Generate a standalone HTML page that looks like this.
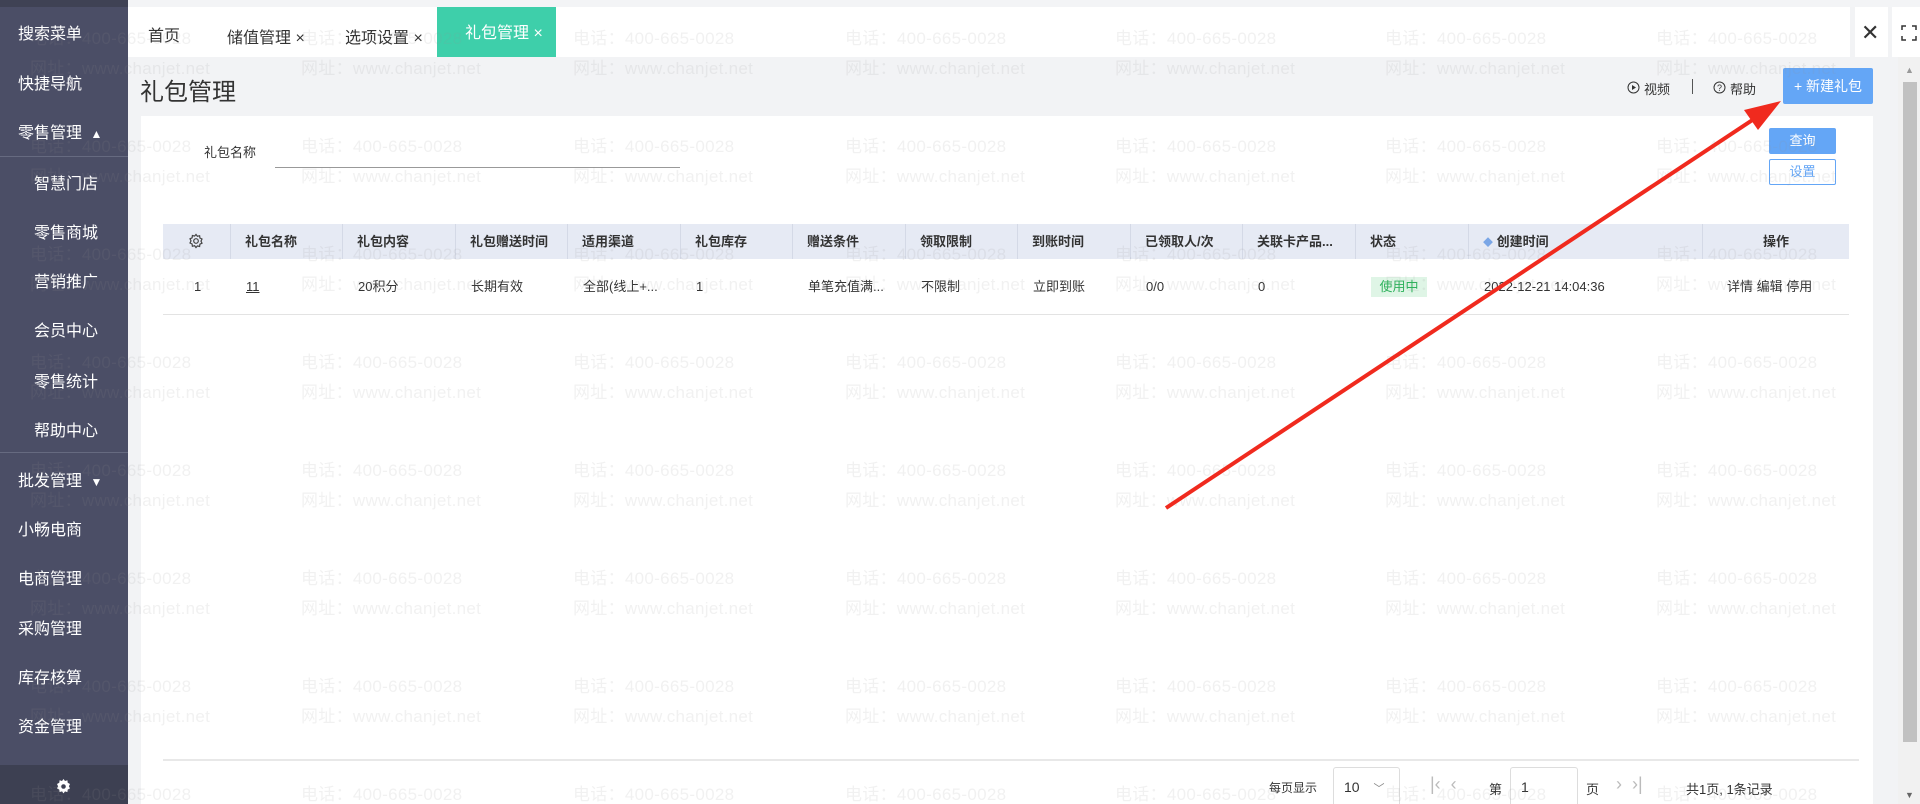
<!DOCTYPE html>
<html style="overflow:hidden;height:804px"><head><meta charset="utf-8"><style>
*{margin:0;padding:0;box-sizing:border-box}
body{width:1920px;height:804px;overflow:hidden;position:relative;background:#f2f3f5;font-family:"Liberation Sans","Noto Sans CJK SC",sans-serif;color:#333}
.a{position:absolute;white-space:nowrap}
#side{left:0;top:0;width:128px;height:804px;background:#4b4e66}
.si{position:absolute;left:18px;color:#fff;font-size:16px;transform:translateY(-50%)}
.sub{left:34px}
.th{position:absolute;top:224px;height:35px;line-height:35px;font-size:13px;font-weight:bold;color:#333;padding-left:14px;border-left:1px solid #d4d9e6}
.td{position:absolute;top:277px;height:20px;line-height:20px;font-size:13px;color:#333;padding-left:14px}
.wm{position:absolute;color:rgba(150,150,150,0.13);font-size:17px;white-space:nowrap;pointer-events:none;letter-spacing:0.3px}
</style></head><body>
<div class="a" style="left:128px;top:0;width:1792px;height:7px;background:#f3f4f6"></div>
<div class="a" style="left:128px;top:7px;width:1722px;height:50px;background:#fff"></div>
<div class="a" style="left:1855px;top:7px;width:33px;height:50px;background:#fff"></div>
<div class="a" style="left:1892px;top:7px;width:28px;height:50px;background:#fff"></div>
<div class="a" style="left:148px;top:22px;font-size:16px">首页</div>
<div class="a" style="left:227px;top:24px;font-size:16px">储值管理 ×</div>
<div class="a" style="left:345px;top:24px;font-size:16px">选项设置 ×</div>
<div class="a" style="left:437px;top:7px;width:119px;height:50px;background:#3ecfaa;color:#fff;font-size:16px;line-height:20px;padding-top:17px;padding-left:28px">礼包管理 ×</div>
<div class="a" style="left:1861px;top:20px;font-size:22px;color:#333">✕</div>
<svg class="a" style="left:1901px;top:25px" width="16" height="16" fill="none" stroke="#333" stroke-width="1.5"><path d="M1 5V1h4M11 1h4v4M15 11v4h-4M5 15H1v-4"/></svg>

<div class="a" style="left:140px;top:72px;font-size:24px;color:#333">礼包管理</div>
<svg class="a" style="left:1627px;top:81px" width="13" height="13"><circle cx="6.5" cy="6.5" r="5.5" fill="none" stroke="#333"/><path d="M5 4l4 2.5L5 9z" fill="#333"/></svg>
<div class="a" style="left:1644px;top:79px;font-size:13px">视频</div>
<div class="a" style="left:1692px;top:79px;width:1px;height:15px;background:#555"></div>
<svg class="a" style="left:1713px;top:81px" width="13" height="13"><circle cx="6.5" cy="6.5" r="5.5" fill="none" stroke="#333"/><text x="6.5" y="10" font-size="9" text-anchor="middle" fill="#333">?</text></svg>
<div class="a" style="left:1730px;top:79px;font-size:13px">帮助</div>
<div class="a" style="left:1783px;top:68px;width:90px;height:36px;background:#64a6f6;border-radius:2px;color:#fff;font-size:14px;line-height:36px;text-align:center">+ 新建礼包</div>

<div class="a" style="left:141px;top:116px;width:1732px;height:688px;background:#fff"></div>
<div class="a" style="left:204px;top:142px;font-size:13px">礼包名称</div>
<div class="a" style="left:275px;top:167px;width:405px;height:1px;background:#999"></div>
<div class="a" style="left:1769px;top:128px;width:67px;height:26px;background:#64a6f6;border-radius:2px;color:#fff;font-size:13px;line-height:26px;text-align:center">查询</div>
<div class="a" style="left:1769px;top:159px;width:67px;height:26px;border:1px solid #64a6f6;border-radius:2px;color:#64a6f6;font-size:13px;line-height:24px;text-align:center">设置</div>

<div class="a" style="left:163px;top:224px;width:1686px;height:35px;background:#e6eaf4"></div>
<svg class="a" style="left:188px;top:233px" width="16" height="16" fill="none" stroke="#444" stroke-width="1.2"><path d="M8 1.5l1.4 1.8 2.2-.6.3 2.3 2.1 1-1 2.1 1 2.1-2.1 1-.3 2.3-2.2-.6L8 14.5l-1.4-1.8-2.2.6-.3-2.3-2.1-1 1-2.1-1-2.1 2.1-1 .3-2.3 2.2.6z"/><circle cx="8" cy="8" r="2.3"/></svg>
<div class="th" style="left:230px">礼包名称</div>
<div class="th" style="left:342px">礼包内容</div>
<div class="th" style="left:455px">礼包赠送时间</div>
<div class="th" style="left:567px">适用渠道</div>
<div class="th" style="left:680px">礼包库存</div>
<div class="th" style="left:792px">赠送条件</div>
<div class="th" style="left:905px">领取限制</div>
<div class="th" style="left:1017px">到账时间</div>
<div class="th" style="left:1130px">已领取人/次</div>
<div class="th" style="left:1242px">关联卡产品...</div>
<div class="th" style="left:1355px">状态</div>
<div class="th" style="left:1468px;padding-left:14px"><span style="color:#7aa6e6;font-size:10px">◆</span> 创建时间</div>
<div class="th" style="left:1702px;width:147px;padding:0;text-align:center">操作</div>
<div class="td" style="left:180px">1</div>
<div class="td" style="left:232px;text-decoration:underline">11</div>
<div class="td" style="left:344px">20积分</div>
<div class="td" style="left:457px">长期有效</div>
<div class="td" style="left:569px">全部(线上+...</div>
<div class="td" style="left:682px">1</div>
<div class="td" style="left:794px">单笔充值满...</div>
<div class="td" style="left:907px">不限制</div>
<div class="td" style="left:1019px">立即到账</div>
<div class="td" style="left:1132px">0/0</div>
<div class="td" style="left:1244px">0</div>
<div class="a" style="left:1371px;top:277px;width:56px;height:20px;background:#dff5e6;color:#2bb25a;font-size:13px;line-height:20px;text-align:center">使用中</div>
<div class="td" style="left:1470px">2022-12-21 14:04:36</div>
<div class="td" style="left:1713px">详情 编辑 停用</div>
<div class="a" style="left:163px;top:314px;width:1686px;height:1px;background:#e3e3e3"></div>

<div class="a" style="left:163px;top:759px;width:1696px;height:2px;background:#e8e8e8"></div>
<div class="a" style="left:1269px;top:779px;font-size:12px">每页显示</div>
<div class="a" style="left:1333px;top:767px;width:67px;height:40px;border:1px solid #ddd;border-radius:3px;font-size:14px;line-height:38px;padding-left:10px">10 <span style="color:#888;margin-left:10px;font-size:11px">﹀</span></div>
<div class="a" style="left:1430px;top:774px;font-size:18px;color:#bbb">|‹ &nbsp;‹</div>
<div class="a" style="left:1489px;top:779px;font-size:13px">第</div>
<div class="a" style="left:1510px;top:767px;width:68px;height:40px;border:1px solid #ddd;border-radius:3px;font-size:14px;line-height:38px;padding-left:10px">1</div>
<div class="a" style="left:1586px;top:779px;font-size:13px">页</div>
<div class="a" style="left:1616px;top:774px;font-size:18px;color:#bbb">› &nbsp;›|</div>
<div class="a" style="left:1686px;top:779px;font-size:13px">共1页, 1条记录</div>

<div class="a" style="left:1898px;top:57px;width:22px;height:747px;background:#f1f1f1"></div>
<div class="a" style="left:1903px;top:82px;width:14px;height:660px;background:#c1c1c1"></div>
<div class="a" style="left:1905px;top:65px;font-size:9px;color:#999">▲</div>
<div class="a" style="left:1905px;top:790px;font-size:9px;color:#666">▼</div>

<div id="side" class="a">
<div class="a" style="left:0;top:0;width:128px;height:7px;background:#3f4254"></div>
<div class="si" style="top:32px">搜索菜单</div>
<div class="si" style="top:82px">快捷导航</div>
<div class="si" style="top:131px">零售管理 <span style="font-size:12px;margin-left:4px">▲</span></div>
<div class="a" style="left:0;top:156px;width:128px;height:1px;background:#666a80"></div>
<div class="si sub" style="top:182px">智慧门店</div>
<div class="si sub" style="top:231px">零售商城</div>
<div class="si sub" style="top:280px">营销推广</div>
<div class="si sub" style="top:329px">会员中心</div>
<div class="si sub" style="top:380px">零售统计</div>
<div class="si sub" style="top:429px">帮助中心</div>
<div class="a" style="left:0;top:452px;width:128px;height:1px;background:#666a80"></div>
<div class="si" style="top:479px">批发管理 <span style="font-size:12px;margin-left:4px">▼</span></div>
<div class="si" style="top:528px">小畅电商</div>
<div class="si" style="top:577px">电商管理</div>
<div class="si" style="top:627px">采购管理</div>
<div class="si" style="top:676px">库存核算</div>
<div class="si" style="top:725px">资金管理</div>
<div class="a" style="left:0;top:765px;width:128px;height:39px;background:#3d4052"></div>
<svg class="a" style="left:55px;top:778px" width="17" height="17"><path d="M8.5 1l1.5 2 2.4-.7.3 2.5 2.3 1.2-1.1 2.2 1.1 2.2-2.3 1.2-.3 2.5-2.4-.7-1.5 2-1.5-2-2.4.7-.3-2.5L2 10.4l1.1-2.2L2 6l2.3-1.2.3-2.5 2.4.7z" fill="#fff"/><circle cx="8.5" cy="8.5" r="2.3" fill="#3d4052"/></svg>
</div>

<div id="wms" style="position:absolute;left:0;top:0;width:1920px;height:804px;overflow:hidden;pointer-events:none"></div>
<script>
var h='';var xs=[30,301,573,845,1115,1385,1656];var ys=[35,143,251,359,467,575,683,791];
ys.forEach(function(y){xs.forEach(function(x){h+='<div class="wm" style="left:'+x+'px;top:'+(y-11)+'px">电话：400-665-0028</div><div class="wm" style="left:'+x+'px;top:'+(y+19)+'px">网址：www.chanjet.net</div>';});});
document.getElementById('wms').innerHTML=h;
</script>

<svg class="a" style="left:0;top:0" width="1920" height="804"><line x1="1166" y1="508" x2="1760" y2="115" stroke="#f02a1e" stroke-width="4"/><path d="M1781 101L1744 110L1758 130Z" fill="#f02a1e"/></svg>
</body></html>
